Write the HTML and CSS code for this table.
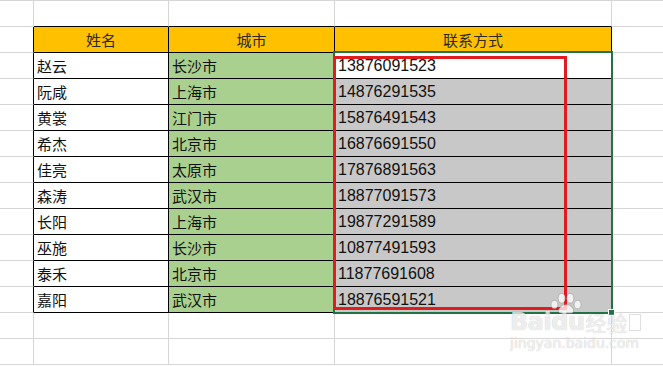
FILE: index.html
```html
<!DOCTYPE html>
<html lang="zh-CN">
<head>
<meta charset="utf-8">
<link rel="stylesheet" href="styles.css">
</head>
<body>
<div class="sheet">
  <div class="c"></div><div class="c above"></div><div class="c above"></div><div class="c above"></div><div class="c e"></div>

  <div class="c left"></div><div class="c t hd">姓名</div><div class="c t hd">城市</div><div class="c t hd">联系方式</div><div class="c e"></div>

  <div class="c left"></div><div class="c t cn">赵云</div><div class="c t cn city">长沙市</div><div class="c t num active">13876091523</div><div class="c e"></div>
  <div class="c left"></div><div class="c t cn">阮咸</div><div class="c t cn city">上海市</div><div class="c t num sel">14876291535</div><div class="c e"></div>
  <div class="c left"></div><div class="c t cn">黄裳</div><div class="c t cn city">江门市</div><div class="c t num sel">15876491543</div><div class="c e"></div>
  <div class="c left"></div><div class="c t cn">希杰</div><div class="c t cn city">北京市</div><div class="c t num sel">16876691550</div><div class="c e"></div>
  <div class="c left"></div><div class="c t cn">佳亮</div><div class="c t cn city">太原市</div><div class="c t num sel">17876891563</div><div class="c e"></div>
  <div class="c left"></div><div class="c t cn">森涛</div><div class="c t cn city">武汉市</div><div class="c t num sel">18877091573</div><div class="c e"></div>
  <div class="c left"></div><div class="c t cn">长阳</div><div class="c t cn city">上海市</div><div class="c t num sel">19877291589</div><div class="c e"></div>
  <div class="c left"></div><div class="c t cn">巫施</div><div class="c t cn city">长沙市</div><div class="c t num sel">10877491593</div><div class="c e"></div>
  <div class="c left"></div><div class="c t cn">泰禾</div><div class="c t cn city">北京市</div><div class="c t num sel">11877691608</div><div class="c e"></div>
  <div class="c left"></div><div class="c t cn">嘉阳</div><div class="c t cn city">武汉市</div><div class="c t num sel">18876591521</div><div class="c e"></div>

  <div class="c"></div><div class="c"></div><div class="c"></div><div class="c"></div><div class="c e"></div>
  <div class="c"></div><div class="c"></div><div class="c"></div><div class="c"></div><div class="c e"></div>

  <div class="selection"><span class="handle"></span></div>
  <div class="redbox"></div>

  <div class="watermark">
    <svg class="paw" width="30" height="20" viewBox="0 0 30 20">
      <ellipse cx="4" cy="11" rx="3.2" ry="4" />
      <ellipse cx="11" cy="5" rx="3.4" ry="4.6" />
      <ellipse cx="19" cy="5" rx="3.4" ry="4.6" />
      <ellipse cx="26" cy="11" rx="3.2" ry="4" />
      <path d="M15 11 C10 11 7 16 8 18 C9 20 13 19 15 19 C17 19 21 20 22 18 C23 16 20 11 15 11 Z" />
    </svg>
    <div class="wm-top">
      <span class="wm-en">Baidu</span>
      <span class="wm-cn">经验</span>
      <span class="wm-box"></span>
    </div>
    <div class="wm-url">jingyan.baidu.com</div>
  </div>
</div>
</body>
</html>
```

FILE: styles.css
```css
html, body {
  margin: 0;
  padding: 0;
  background: #ffffff;
}

.sheet {
  position: relative;
  display: grid;
  grid-template-columns: 34px 135px 166px 277px 1fr;
  grid-auto-rows: 26px;
  border-top: 1px solid #d6d6d6;
  width: 663px;
  height: 366px;
  overflow: hidden;
  font-family: "Liberation Sans", "Noto Sans CJK SC", sans-serif;
  color: #111;
}

.c {
  box-sizing: border-box;
  border-right: 1px solid #d6d6d6;
  border-bottom: 1px solid #d6d6d6;
  display: flex;
  align-items: center;
  padding-left: 3px;
  white-space: nowrap;
}

.c.e {
  border-right: none;
}

.c.above {
  border-bottom-color: #000;
}

.c.left {
  border-right-color: #000;
}

.c.t {
  border-right-color: #000;
  border-bottom-color: #000;
}

.hd {
  background: #ffc000;
  justify-content: center;
  padding-left: 0;
  font-family: "Noto Sans CJK SC", sans-serif;
  font-size: 15px;
  color: #2a2a2a;
}

.cn {
  font-family: "Noto Sans CJK SC", sans-serif;
  font-size: 15px;
}

.city {
  background: #a9d08e;
}

.num {
  font-size: 16px;
  padding-top: 1px;
}

.sel {
  background: #c8c8c8;
}

.active {
  background: #ffffff;
}

.selection {
  position: absolute;
  grid-column: 4 / 5;
  grid-row: 3 / 13;
  left: -2px;
  top: -2px;
  right: -1px;
  bottom: -1px;
  border: 2px solid #217346;
  pointer-events: none;
}

.handle {
  position: absolute;
  right: -4px;
  bottom: -4px;
  width: 5px;
  height: 5px;
  background: #217346;
  border: 1px solid #ffffff;
}

.redbox {
  position: absolute;
  left: 333px;
  top: 55px;
  width: 234px;
  height: 254px;
  box-sizing: border-box;
  border: 3px solid #e01c1c;
}

.watermark {
  position: absolute;
  left: 510px;
  top: 292px;
  width: 150px;
  color: rgba(255, 255, 255, 0.75);
  text-shadow: 0 0 1px rgba(0, 0, 0, 0.28);
  pointer-events: none;
}

.paw {
  position: absolute;
  left: 40px;
  top: 0;
  width: 32px;
  height: 21px;
  fill: rgba(255, 255, 255, 0.75);
  stroke: rgba(0, 0, 0, 0.15);
  stroke-width: 1;
}

.wm-top {
  display: flex;
  align-items: flex-end;
  padding-top: 17px;
}

.wm-en {
  font-family: "DejaVu Sans", sans-serif;
  font-weight: bold;
  font-size: 24px;
  line-height: 24px;
  letter-spacing: -0.5px;
}

.wm-cn {
  font-family: "Noto Sans CJK SC", sans-serif;
  font-size: 21px;
  line-height: 24px;
  margin-left: 1px;
}

.wm-box {
  width: 10px;
  height: 15px;
  margin: 0 0 3px 2px;
  border: 1px solid rgba(0, 0, 0, 0.12);
  background: rgba(255, 255, 255, 0.5);
}

.wm-url {
  font-family: "DejaVu Sans", sans-serif;
  font-size: 14px;
  line-height: 16px;
  margin-top: 1px;
}
```
